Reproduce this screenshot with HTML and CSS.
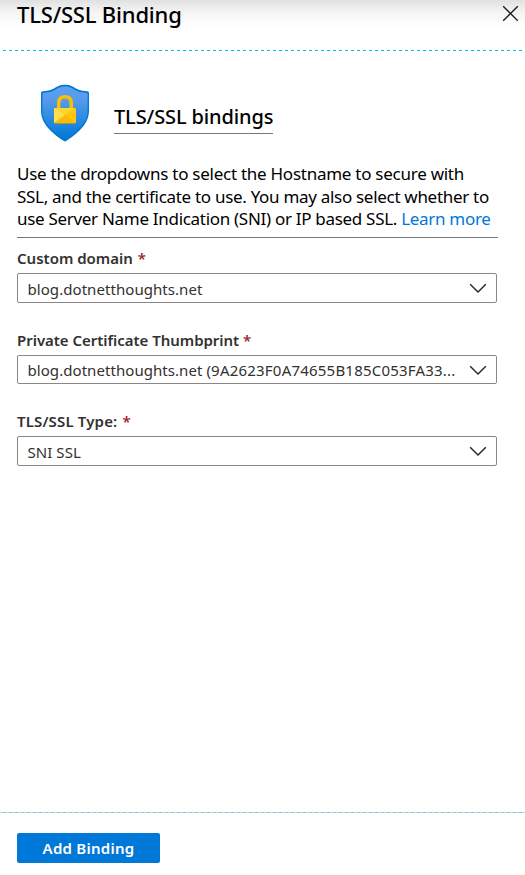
FILE: index.html
```html
<!DOCTYPE html>
<html lang="en">
<head>
<meta charset="utf-8">
<title>TLS/SSL Binding</title>
<link rel="stylesheet" href="styles.css">
</head>
<body>
<main class="blade">
  <header class="header">
    <h1 class="title">TLS/SSL Binding</h1>
    <svg class="close" width="17" height="17" viewBox="0 0 17 17"><path d="M1.2 1.2 15.8 15.8M15.8 1.2 1.2 15.8"/></svg>
  </header>
  <svg class="divider" width="525" height="1"><path class="divider-top" d="M3 .5H523"/></svg>
  <section class="content">
    <div class="intro">
      <svg class="shield" width="48" height="58" viewBox="0 0 48 58">
        <defs>
          <linearGradient id="blue" x1="0" y1="0" x2="0" y2="1"><stop offset="0" stop-color="#5ea0ef"/><stop offset=".25" stop-color="#559bec"/><stop offset="1" stop-color="#0078d4"/></linearGradient>
        </defs>
        <path fill="#0078d4" d="M48 27C48 42.500 31 53 25.500 56.700Q24 57.700 22.500 56.700C17 53 0 42.500 0 27V9Q0 7.300 1.700 7.200C15 6.800 14 .8 24 .8S33 6.800 46.300 7.200Q48 7.300 48 9Z"/>
        <path fill="url(#blue)" d="M46.600 27C46.600 41 30.800 51.200 25.300 54.900Q24 55.800 22.700 54.900C17.200 51.200 1.400 41 1.400 27V10.300Q1.400 8.900 3 8.800C16 8.300 15 2.600 24 2.600S32 8.300 45 8.800Q46.600 8.900 46.600 10.300Z"/>
        <path fill="none" stroke="#ffbd02" stroke-width="3.500" d="M17.700 25V19.500C17.700 15 20.300 12.800 24 12.800S30.300 15 30.300 19.500V25"/>
        <rect x="13" y="24" width="22" height="15.200" rx="1" fill="#ffc70f"/>
        <path fill="#ffe052" d="M14 24 24 31 13.300 38.800Q13 38.500 13 38V25Q13 24 14 24Z"/>
        <path fill="#ffd62e" d="M14 24H34L24 31Z"/>
        <path fill="#ffb900" d="M24 31 34.700 38.800Q34.500 39.200 34 39.200H14Q13.500 39.200 13.300 38.800Z"/>
      </svg>
      <h2 class="subtitle">TLS/SSL bindings</h2>
    </div>
    <p class="desc">Use the dropdowns to select the Hostname to secure with<br><span class="tight">SSL, and the certificate to use. You may also select whether to</span><br><span class="tight">use Server Name Indication (SNI) or IP based SSL. <a class="link">Learn more</a></span></p>
    <div class="field field-domain">
      <div class="label">Custom domain <span class="req">*</span></div>
      <div class="select"><span>blog.dotnetthoughts.net</span><svg class="chev" width="18" height="11" viewBox="0 0 18 11"><path d="M1.200 1.200 9 9 16.800 1.200"/></svg></div>
    </div>
    <div class="field field-cert">
      <div class="label">Private Certificate Thumbprint <span class="req">*</span></div>
      <div class="select"><span>blog.dotnetthoughts.net <span class="thumbprint">(9A2623F0A74655B185C053FA33...</span></span><svg class="chev" width="18" height="11" viewBox="0 0 18 11"><path d="M1.200 1.200 9 9 16.800 1.200"/></svg></div>
    </div>
    <div class="field field-type">
      <div class="label">TLS/SSL Type: <span class="req">*</span></div>
      <div class="select"><span>SNI SSL</span><svg class="chev" width="18" height="11" viewBox="0 0 18 11"><path d="M1.200 1.200 9 9 16.800 1.200"/></svg></div>
    </div>
  </section>
  <svg class="divider" width="525" height="1"><path class="divider-base" d="M0 .5H525"/><path class="divider-bottom" d="M3 .5H525"/></svg>
  <footer class="footer"><button class="add">Add Binding</button></footer>
</main>
</body>
</html>
```
FILE: styles.css
```css
* { box-sizing: border-box; }
body { margin: 0; font-family: "Noto Sans", "Open Sans", sans-serif; color: #000; background: #fff; }
.blade { display: flex; flex-direction: column; width: 525px; height: 875px; overflow: hidden; }
.header { display: flex; flex: none; justify-content: space-between; height: 50px; padding: 0 6px 0 17px; background: linear-gradient(#e1e1e1, #f4f4f4 12px, #fff 27px); }
.title { margin: 0; font-size: 22px; line-height: 28px; font-weight: 500; letter-spacing: -.19px; white-space: nowrap; }
.close { margin-top: 5px; fill: none; stroke: #1b1b1b; stroke-width: 1.3; }
.divider { display: block; flex: none; fill: none; }
.divider-top { stroke: #00bcf2; stroke-dasharray: 3 3; }
.divider-base { stroke: #d5d5d5; }
.divider-bottom { stroke: #86c5d5; stroke-dasharray: 3 3; }
.content { flex: none; height: 761px; padding: 33px 27px 0 17px; }
.intro { display: flex; padding-left: 24px; height: 77px; }
.subtitle { align-self: flex-start; height: 33px; margin: 17px 0 0 25px; border-bottom: 1px solid #777; font-size: 20px; line-height: 31px; font-weight: 500; letter-spacing: -.12px; white-space: nowrap; }
.desc { margin: 0; height: 77px; padding-top: 2px; width: 481px; border-bottom: 1px solid #777; font-size: 17px; line-height: 22.7px; letter-spacing: -.26px; white-space: nowrap; }
.tight { letter-spacing: -.3px; }
.link { color: #0078d4; }
.field-domain { margin-top: 9px; }
.field-cert { margin-top: 26px; }
.field-type { margin-top: 26px; }
.label { height: 26px; font-size: 15px; line-height: 22px; font-weight: 600; color: #323130; white-space: nowrap; }
.field-cert .label { letter-spacing: -.03px; }
.field-type .label { letter-spacing: .16px; }
.req { margin-left: 1px; color: #a4262c; }
.field-cert .req { margin-left: 0; }
.select { display: flex; align-items: center; justify-content: space-between; width: 480px; height: 30px; padding: 1px 9px 0; border: 1px solid #8a8886; border-radius: 2px; font-size: 15px; line-height: 20px; letter-spacing: .06px; color: #323130; white-space: nowrap; }
.select > span { padding-left: .5px; }
.thumbprint { letter-spacing: .21px; }
.field-cert .select { height: 29px; }
.chev { flex: none; fill: none; stroke: #252423; stroke-width: 1.4; }
.footer { flex: none; padding: 20px 17px 12px; }
.add { display: block; width: 143px; height: 30px; padding: 0; border: 0; border-radius: 2px; background: #0078d7; color: #fff; font: 600 15px/30px "Noto Sans", "Open Sans", sans-serif; letter-spacing: .25px; }
```
